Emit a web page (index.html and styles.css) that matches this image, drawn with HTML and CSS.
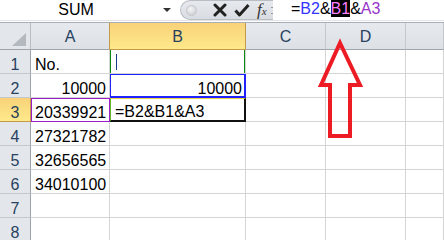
FILE: index.html
```html
<!DOCTYPE html>
<html lang="en">
<head>
    <meta charset="UTF-8">
    <title>SUM</title>
    <link rel="stylesheet" href="styles.css">
</head>
<body>
    <!-- Formula bar -->
    <div class="formula-bar">
        <div class="name-box">
            <span class="name">SUM</span>
            <span class="drop"></span>
        </div>
        <div class="tools">
            <span class="dot"></span>
            <svg class="tool" width="14" height="14" viewBox="0 0 14 14">
                <path d="M2 2 L12 12 M12 2 L2 12" stroke="#222" stroke-width="3" stroke-linecap="round"/>
            </svg>
            <svg class="tool" width="16" height="14" viewBox="0 0 16 14">
                <path d="M1.5 7.5 L5.5 12 L14.5 2" stroke="#222" stroke-width="3" fill="none" stroke-linejoin="round"/>
            </svg>
            <span class="fx">f<small>x</small></span>
            <span class="grip"></span>
        </div>
        <div class="formula">=<span class="ref-b2">B2</span>&amp;<span class="ref-b1">B1</span>&amp;<span class="ref-a3">A3</span></div>
    </div>
    <div class="bar-gap"></div>

    <!-- Sheet -->
    <div class="sheet">
        <div class="corner"><span class="tri"></span></div>
        <div class="col-head">A</div>
        <div class="col-head active">B</div>
        <div class="col-head">C</div>
        <div class="col-head">D</div>
        <div class="col-head"></div>

        <div class="row-head">1</div>
        <div class="cell">No.</div>
        <div class="cell range-b1"><span class="caret"></span></div>
        <div class="cell"></div><div class="cell"></div><div class="cell"></div>

        <div class="row-head">2</div>
        <div class="cell num">10000</div>
        <div class="cell num range-b2">10000</div>
        <div class="cell"></div><div class="cell"></div><div class="cell"></div>

        <div class="row-head active">3</div>
        <div class="cell range-a3">20339921</div>
        <div class="cell active-cell">=B2&amp;B1&amp;A3</div>
        <div class="cell"></div><div class="cell"></div><div class="cell"></div>

        <div class="row-head">4</div>
        <div class="cell">27321782</div>
        <div class="cell"></div><div class="cell"></div><div class="cell"></div><div class="cell"></div>

        <div class="row-head">5</div>
        <div class="cell">32656565</div>
        <div class="cell"></div><div class="cell"></div><div class="cell"></div><div class="cell"></div>

        <div class="row-head">6</div>
        <div class="cell">34010100</div>
        <div class="cell"></div><div class="cell"></div><div class="cell"></div><div class="cell"></div>

        <div class="row-head">7</div>
        <div class="cell"></div><div class="cell"></div><div class="cell"></div><div class="cell"></div><div class="cell"></div>

        <div class="row-head">8</div>
        <div class="cell"></div><div class="cell"></div><div class="cell"></div><div class="cell"></div><div class="cell"></div>
    </div>

    <!-- Red annotation arrow -->
    <svg class="arrow" width="60" height="110" viewBox="310 35 60 110">
        <path d="M340 43 L360 85 L350 85 L350 136 L330 136 L330 85 L321 85 Z"
              fill="none" stroke="#ed1c24" stroke-width="4" stroke-linejoin="miter"/>
    </svg>
</body>
</html>
```

FILE: styles.css
```css
/* General */
body {
    margin: 0;
    width: 444px;
    height: 240px;
    overflow: hidden;
    background: #fff;
    font-family: 'Liberation Sans', Arial, sans-serif;
    font-size: 16px;
    color: #000;
    position: relative;
}

/* Formula bar */
.formula-bar {
    display: flex;
    height: 20px;
    background: #fff;
}

.name-box {
    width: 180px;
    display: flex;
    align-items: center;
    position: relative;
}

.name {
    width: 152px;
    text-align: center;
    line-height: 20px;
}

.drop {
    margin-left: 11px;
    width: 0;
    height: 0;
    border-left: 4px solid transparent;
    border-right: 4px solid transparent;
    border-top: 4px solid #333;
}

.tools {
    width: 93px;
    display: flex;
    align-items: center;
    background: linear-gradient(#e6e9ed, #d9dde2);
    border: 1px solid #b9bec4;
    border-right: none;
    border-radius: 10px 0 0 10px;
    box-sizing: border-box;
    padding-left: 5px;
}

.dot {
    width: 9px;
    height: 9px;
    border-radius: 50%;
    background: radial-gradient(circle at 40% 35%, #f4f5f6, #c3c7cc);
    border: 1px solid #c3c7cc;
    margin-right: 16px;
}

.tool {
    margin-right: 7px;
}

.fx {
    font-family: 'Liberation Serif', 'Times New Roman', serif;
    font-style: italic;
    font-size: 17px;
    color: #333;
    line-height: 20px;
}

.fx small {
    font-size: 11px;
}

.grip {
    margin-left: auto;
    width: 2px;
    height: 5px;
    border-top: 1px solid #999;
    border-bottom: 1px solid #999;
}

.formula {
    flex: 1;
    padding-left: 18px;
    line-height: 20px;
    margin-top: -1px;
}

.ref-b2 { color: #3333ff; }
.ref-b1 { color: #ff7fff; background: #000; }
.ref-a3 { color: #9933cc; }

.bar-gap {
    height: 1px;
    border-top: 1px solid #e2e4e7;
    border-bottom: 1px solid #a9aeb5;
}

/* Sheet grid */
.sheet {
    display: grid;
    grid-template-columns: 31px 79px 136px 80px 80px 1fr;
    grid-template-rows: 27px repeat(8, 24px);
}

.corner,
.col-head,
.row-head {
    background: #e3e6ea;
    color: #27415f;
    box-sizing: border-box;
    display: flex;
    align-items: center;
    justify-content: center;
}

.corner {
    border-right: 1px solid #b9bec4;
    border-bottom: 1px solid #9ea4ab;
    align-items: flex-end;
    justify-content: flex-end;
    padding: 0 4px 3px 0;
}

.tri {
    width: 0;
    height: 0;
    border-left: 14px solid transparent;
    border-bottom: 13px solid #b4b9bf;
}

.col-head {
    background: linear-gradient(#e6e9ed, #dde1e6);
    border-right: 1px solid #c4c8cd;
    border-bottom: 1px solid #9ea4ab;
    padding-top: 2px;
}

.row-head {
    border-right: 1px solid #9ea4ab;
    border-bottom: 1px solid #c4c8cd;
    align-items: flex-end;
    line-height: 17px;
}

.col-head.active,
.row-head.active {
    background: linear-gradient(#f8d27a, #ffe98a);
    border-color: #c29b4a;
}

.col-head.active {
    border-left: 1px solid #c29b4a;
    margin-left: -1px;
}

.cell {
    box-sizing: border-box;
    border-right: 1px solid #d4d4d4;
    border-bottom: 1px solid #d4d4d4;
    display: flex;
    align-items: flex-end;
    line-height: 17px;
    padding-left: 4px;
    white-space: nowrap;
    overflow: hidden;
}

.cell.num {
    justify-content: flex-end;
    padding-right: 3px;
}

/* Referenced ranges */
.range-b1 {
    box-shadow: inset 1px 0 0 #0b8a12, inset -1px 0 0 #0b8a12;
}

.range-b2 {
    box-shadow: inset 0 0 0 1px #2222ff;
    border-bottom-color: #2222ff;
    border-right-color: #2222ff;
}

.range-a3 {
    box-shadow: inset 1px 1px 0 #9b1ec8;
    border-bottom-color: #9b1ec8;
    border-right-color: #9b1ec8;
}

.caret {
    width: 1px;
    height: 16px;
    background: #1b3a8a;
    margin: 0 0 3px 2px;
}

.active-cell {
    border: 2px solid #111;
    border-top: 1px solid #e8d840;
    border-left: 1px solid #5fb92a;
}

/* Annotation */
.arrow {
    position: absolute;
    left: 310px;
    top: 35px;
}
```
